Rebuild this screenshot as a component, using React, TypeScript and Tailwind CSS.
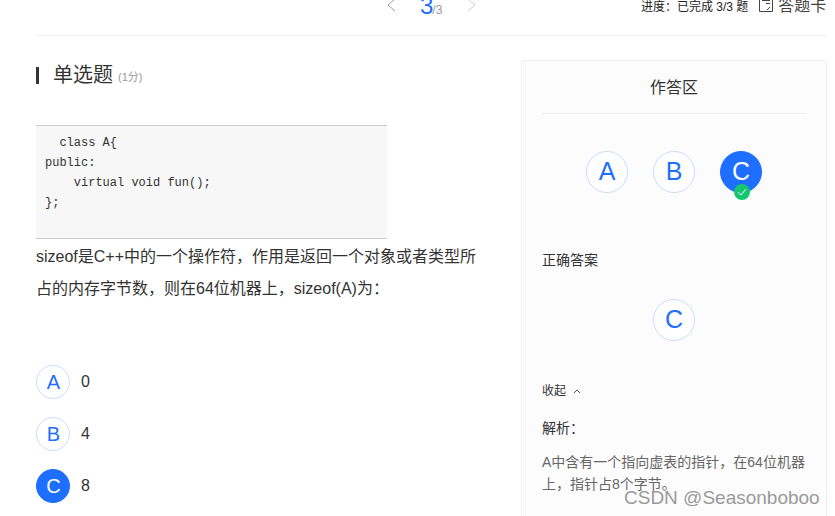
import React from "react";

const F = { fontFamily: '"Liberation Sans", "Noto Sans CJK SC", sans-serif' };

function Circle({ l, size, active, text }: { l: string; size: string; active?: boolean; text: string }) {
  return (
    <div className={`${size} ${text} pl-[1px] rounded-full flex items-center justify-center shrink-0 border ${active ? "bg-[#1e6fff] border-[#1e6fff] text-white" : "bg-white border-[#c9dcff] text-[#1e6fff]"}`}>
      {l}
    </div>
  );
}

function Option({ l, v, active }: { l: string; v: string; active?: boolean }) {
  return (
    <div className="flex items-center h-[34px] gap-[11px]">
      <Circle l={l} size="w-[34px] h-[34px]" text="text-[20px]" active={active} />
      <span className="text-[16px] text-[#333]">{v}</span>
    </div>
  );
}

export default function App() {
  return (
    <div style={F} className="relative w-[835px] h-[516px] overflow-hidden bg-white">
      <div className="ml-[36px] w-[791px] h-[36px] border-b border-[#eeeeee] flex items-start overflow-hidden relative">
        <div className="flex items-start ml-[349px] h-full">
          <svg width="12" height="14" viewBox="0 0 12 14" className="mt-[-2px]" fill="none" stroke="#999" strokeWidth="1">
            <path d="M10 1 L3 7 L10 13" />
          </svg>
          <div className="ml-[23px] w-[36px] h-[12px] flex items-baseline">
            <span className="text-[24px] leading-[12px] text-[#1e6fff]">3</span>
            <span className="text-[12px] leading-[12px] text-[#999] ml-[-1px]">/3</span>
          </div>
          <svg width="12" height="14" viewBox="0 0 12 14" className="ml-[10px] mt-[-2px]" fill="none" stroke="#ccc" strokeWidth="1">
            <path d="M2 1 L9 7 L2 13" />
          </svg>
        </div>
        <div className="ml-[163px] text-[12px] leading-[14px] text-[#222] whitespace-nowrap">进度：已完成 3/3 题</div>
        <svg width="14" height="15" viewBox="0 0 14 15" className="ml-[11px] mt-[-2px] shrink-0" fill="none" stroke="#444" strokeWidth="1">
          <path d="M0.5 0 V13.5 H13.5 V0 M3 2.5 H11 M7 5.5 H11 M11 9 L8 12" />
        </svg>
        <div className="ml-[5px] text-[16px] leading-[12px] text-[#444] whitespace-nowrap">答题卡</div>
      </div>

      <div className="flex ml-[36px] mt-[24px]">
        <div className="w-[485px] shrink-0">
          <div className="flex items-center h-[30px]">
            <div className="w-[3px] h-[17px] bg-[#333]" />
            <span className="ml-[14px] text-[20px] text-[#333]">单选题</span>
            <span className="ml-[5px] mt-[4px] text-[11px] text-[#999]">(1分)</span>
          </div>
          <pre
            style={{ fontFamily: '"Liberation Mono", monospace' }}
            className="mt-[35px] w-[351px] h-[114px] bg-[#f7f7f7] border-y border-[#cccccc] pl-[9px] pt-[7px] text-[12px] leading-[20px] text-[#333] whitespace-pre"
          >
{`  class A{
public:
    virtual void fun();
};`}
          </pre>
          <div className="w-[445px] text-[16px] leading-[32px] text-[#333] mt-[2px]">
            sizeof是C++中的一个操作符，作用是返回一个对象或者类型所占的内存字节数，则在64位机器上，sizeof(A)为：
          </div>
          <div className="mt-[60px] flex flex-col gap-[18px]">
            <Option l="A" v="0" />
            <Option l="B" v="4" />
            <Option l="C" v="8" active />
          </div>
        </div>

        <div className="w-[306px] h-[520px] shrink-0 bg-[#fcfcfd] border border-[#eeeeee] rounded-[4px] px-[20px]">
          <div className="h-[53px] pt-[2px] border-b border-[#eeeeee] flex items-center justify-center text-[16px] text-[#333]">作答区</div>
          <div className="mt-[37px] flex justify-center gap-[25px] pr-[1px]">
            <Circle l="A" size="w-[42px] h-[42px]" text="text-[25px]" />
            <Circle l="B" size="w-[42px] h-[42px]" text="text-[25px]" />
            <div className="relative">
              <Circle l="C" size="w-[42px] h-[42px]" text="text-[25px]" active />
              <div className="absolute left-[14px] top-[33px] w-[16px] h-[16px] rounded-full bg-[#14c670] flex items-center justify-center">
                <svg width="10" height="8" viewBox="0 0 10 8" fill="none" stroke="#fff" strokeWidth="1">
                  <path d="M1 4 L4 7 L9 1" />
                </svg>
              </div>
            </div>
          </div>
          <div className="mt-[57px] text-[14px] leading-[20px] text-[#333]">正确答案</div>
          <div className="mt-[29px] flex justify-center pr-[1px]">
            <Circle l="C" size="w-[42px] h-[42px]" text="text-[25px]" />
          </div>
          <div className="mt-[42px] flex items-center text-[12px] leading-[16px] text-[#333]">
            收起
            <svg width="8" height="5" viewBox="0 0 8 5" className="ml-[7px]" fill="none" stroke="#555" strokeWidth="1">
              <path d="M1 4 L4 1 L7 4" />
            </svg>
          </div>
          <div className="mt-[19px] text-[14px] leading-[20px] text-[#333]">解析：</div>
          <div className="mt-[13px] w-[266px] text-[14px] leading-[22px] text-[#666]">A中含有一个指向虚表的指针，在64位机器上，指针占8个字节。</div>
        </div>
      </div>

      <div className="absolute left-[624px] top-[486px] text-[19px] leading-[24px] text-[#9a9a9a] whitespace-nowrap" style={{ fontFamily: '"Liberation Sans", sans-serif' }}>
        CSDN @Seasonboboo
      </div>
    </div>
  );
}
